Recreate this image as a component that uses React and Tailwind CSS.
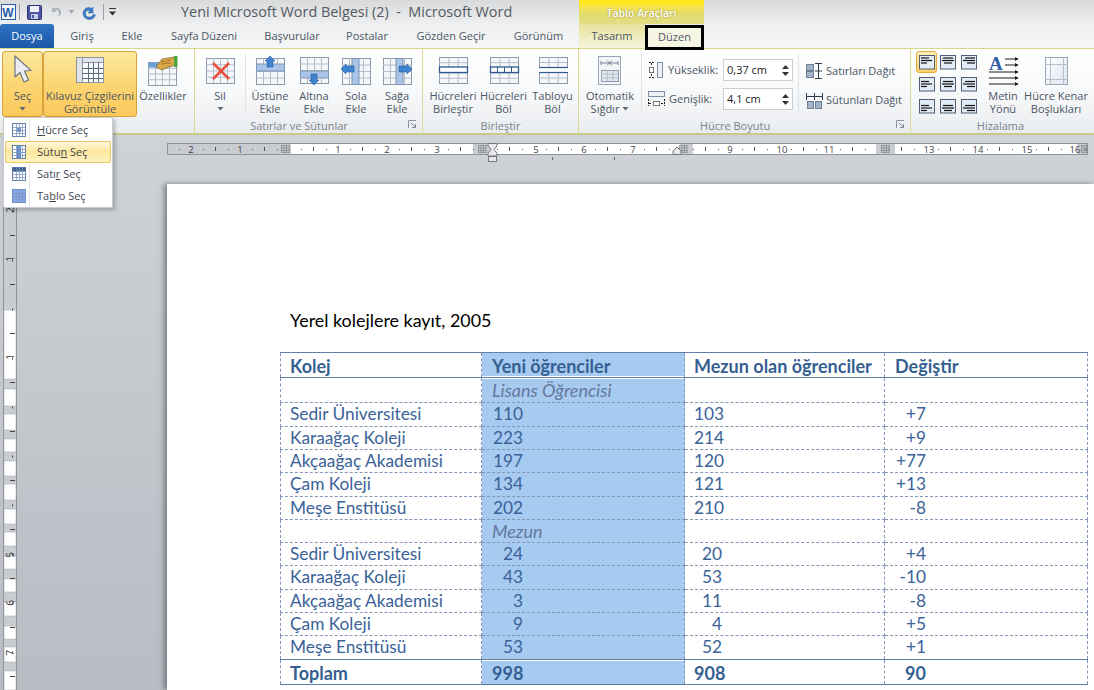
import React from "react";

const BLUE = "#6f9fd8";
const Grid = ({ x = 1, y = 1, w = 28, h = 26, c = 4, r = 4, s = "#8d9aac", f = "#f5f7fa" }) => {
  const v = [], o = [];
  for (let i = 1; i < c; i++) v.push(x + (w * i) / c);
  for (let i = 1; i < r; i++) o.push(y + (h * i) / r);
  return (
    <g>
      <rect x={x + 0.5} y={y + 0.5} width={w} height={h} fill={f} stroke={s} />
      {v.map((a) => <line key={"v" + a} x1={a + 0.5} x2={a + 0.5} y1={y} y2={y + h} stroke="#b4bdc9" />)}
      {o.map((a) => <line key={"o" + a} y1={a + 0.5} y2={a + 0.5} x1={x} x2={x + w} stroke="#b4bdc9" />)}
    </g>
  );
};
const Svg = ({ w = 30, h = 30, children }) => (
  <svg width={w} height={h} viewBox={`0 0 ${w} ${h}`} className="block shrink-0 overflow-visible">{children}</svg>
);

const IconCursor = () => (
  <Svg w={20} h={31}><path d="M2 1 L2 22 L7 17.5 L11 27 L15.5 25 L11.5 16 L18 15.5 Z" fill="#eceef1" stroke="#6d7682" strokeWidth="1.2" strokeLinejoin="round" /></Svg>
);
const IconGuides = () => (
  <Svg><rect x="1.5" y="1.5" width="27" height="25" fill="#fafbfc" stroke="#8b97a6" /><rect x="1.5" y="1.5" width="27" height="5" fill="#dfe3e8" stroke="#8b97a6" /><rect x="1.5" y="1.5" width="6" height="25" fill="#dfe3e8" stroke="#8b97a6" />
    {[12, 17, 22].map((a) => <line key={a} x1="7" x2="28" y1={a + 0.5} y2={a + 0.5} stroke="#5d6d80" />)}
    {[13, 18, 23].map((a) => <line key={a} y1="6" y2="26" x1={a + 0.5} x2={a + 0.5} stroke="#5d6d80" />)}
  </Svg>
);
const IconProps = () => (
  <Svg w={32}><Grid x={1} y={6} w={28} h={23} c={4} r={4} /><rect x="1.5" y="6.5" width="10" height="5" fill={BLUE} />
    <path d="M9 11 L15 3 L28 1 L28 9 L19 12 L15 14 Z" fill="#dba94a" stroke="#7d5a1c" strokeWidth="0.7" /><rect x="27" y="0" width="3.5" height="11" fill="#4aa83c" />
    <path d="M14 6 L24 4 M14 8 L24 7" stroke="#8a6420" strokeWidth="0.7" /></Svg>
);
const IconDelete = () => (
  <Svg><Grid y={2} w={28} h={25} /><path d="M8 7 L24 23 M24 7 L8 23" stroke="#e8503e" strokeWidth="2.6" /></Svg>
);
const IconAbove = () => (
  <Svg><Grid y={2} w={28} h={26} /><rect x="1.5" y="8" width="28" height="7" fill="#a9c4e8" stroke="#7f95b2" /><path d="M15 0 L20 5 L18 5 L18 11 L12 11 L12 5 L10 5 Z" fill="#3e84d0" stroke="#2a5e9c" strokeWidth="0.6" /></Svg>
);
const IconBelow = () => (
  <Svg><Grid y={1} w={28} h={26} /><rect x="1.5" y="15" width="28" height="7" fill="#a9c4e8" stroke="#7f95b2" /><path d="M15 29 L20 24 L18 24 L18 18 L12 18 L12 24 L10 24 Z" fill="#3e84d0" stroke="#2a5e9c" strokeWidth="0.6" /></Svg>
);
const IconLeft = () => (
  <Svg><Grid y={2} w={28} h={26} /><rect x="11" y="2.5" width="7" height="26" fill="#a9c4e8" stroke="#7f95b2" /><path d="M0 13 L5 8 L5 10 L13 10 L13 16 L5 16 L5 18 Z" fill="#3e84d0" stroke="#2a5e9c" strokeWidth="0.6" /></Svg>
);
const IconRight = () => (
  <Svg w={31}><Grid y={2} w={28} h={26} /><rect x="14" y="2.5" width="7" height="26" fill="#a9c4e8" stroke="#7f95b2" /><path d="M30 13 L25 8 L25 10 L17 10 L17 16 L25 16 L25 18 Z" fill="#3e84d0" stroke="#2a5e9c" strokeWidth="0.6" /></Svg>
);
const IconMerge = () => (
  <Svg><Grid y={1} w={28} h={26} c={3} r={5} /><rect x="1.5" y="11" width="28" height="5.5" fill="#fff" stroke="#2e5a8e" strokeWidth="1.3" /></Svg>
);
const IconSplit = () => (
  <Svg><Grid y={1} w={28} h={26} c={3} r={5} /><rect x="1.5" y="11" width="28" height="5.5" fill="#fff" stroke="#2e5a8e" strokeWidth="1.3" />
    {[8, 15, 22].map((a) => <line key={a} x1={a + 0.5} x2={a + 0.5} y1="11" y2="16" stroke="#2e5a8e" />)}</Svg>
);
const IconSplitTable = () => (
  <Svg><Grid y={1} w={28} h={10} c={3} r={2} /><Grid y={16} w={28} h={11} c={3} r={2} /><line x1="1" x2="30" y1="11.5" y2="11.5" stroke="#2e5a8e" strokeWidth="1.2" /><line x1="1" x2="30" y1="16.5" y2="16.5" stroke="#2e5a8e" strokeWidth="1.2" /></Svg>
);
const IconAutoFit = () => (
  <Svg w={24}><rect x="0.5" y="0.5" width="22" height="28" fill="#f3f5f8" stroke="#9ba7b6" /><path d="M3 7 H20 M3 5 V9 M20 5 V9 M9 4.5 L14 9.5 M14 4.5 L9 9.5" stroke="#5b6b7f" strokeWidth="0.8" fill="none" /><Grid x={3} y={14} w={17} h={11} c={3} r={3} f="#e3e9f1" /></Svg>
);
const IconHeight = () => (
  <Svg w={16} h={18}><path d="M1 1.5 H6 M1 16.5 H6 M3.5 2 V5 M3.5 13 V16" stroke="#222" strokeWidth="1" strokeDasharray="2 1" /><rect x="1.5" y="6.5" width="4" height="5" fill="#fff" stroke="#777" /><rect x="9.5" y="1.5" width="5" height="15" fill="#eef2f6" stroke="#8090a4" /></Svg>
);
const IconWidth = () => (
  <Svg w={17} h={17}><rect x="0.5" y="0.5" width="16" height="5" fill="#eef2f6" stroke="#8090a4" /><path d="M0.5 8 V15 M16.5 8 V15 M1 12.5 H4 M13 12.5 H16" stroke="#222" strokeDasharray="2 1" /><rect x="5.5" y="10.5" width="6" height="4" fill="#fff" stroke="#777" /></Svg>
);
const IconDistRows = () => (
  <Svg w={17} h={16}><rect x="0.5" y="1.5" width="7" height="6" fill="#a4b4c8" stroke="#6f7f94" /><rect x="0.5" y="8.5" width="7" height="6" fill="#a4b4c8" stroke="#6f7f94" /><path d="M9 .5 H16 M9 8 H16 M9 15.5 H16 M12.5 1 V15" stroke="#2f3c4d" fill="none" /></Svg>
);
const IconDistCols = () => (
  <Svg w={17} h={17}><path d="M.5 1 V8 M8.5 1 V8 M16.5 1 V8 M1 4.5 H16" stroke="#2f3c4d" fill="none" /><rect x="1.5" y="9.5" width="6" height="7" fill="#a4b4c8" stroke="#6f7f94" /><rect x="9.5" y="9.5" width="6" height="7" fill="#a4b4c8" stroke="#6f7f94" /></Svg>
);
const IconTextDir = () => (
  <Svg w={31} h={31}>
    <text x="1" y="15" fontFamily="Liberation Serif, serif" fontWeight="700" fontSize="19" fill="#2f5ea6">A</text>
    <path d="M17 4 H30 M17 10 H30 M1 17 H30 M1 23 H30 M1 29 H30" stroke="#1d1d1d" fill="none" /><path d="M27 2 L30.5 4 L27 6Z M27 8 L30.5 10 L27 12Z M27 15 L30.5 17 L27 19Z M27 21 L30.5 23 L27 25Z M27 27 L30.5 29 L27 31Z" fill="#1d1d1d" />
  </Svg>
);
const IconMargins = () => (
  <Svg w={25} h={30}><defs><linearGradient id="mg" x1="0" y1="0" x2="1" y2="1"><stop offset="0" stopColor="#fff" /><stop offset="1" stopColor="#dfe6ef" /></linearGradient></defs>
    <rect x="1.5" y="1.5" width="22" height="27" fill="url(#mg)" stroke="#9aa7b7" /><path d="M1 8.5 H24 M1 23.5 H24 M6.5 1 V29 M19.5 1 V29" stroke="#b4bfcc" /></Svg>
);
const Launcher = () => (
  <Svg w={9} h={9}><path d="M.5 8 V.5 H8" stroke="#8b95a1" fill="none" /><path d="M3 3 L7.5 7.5 M7.5 4 V7.5 H4" stroke="#7c8792" fill="none" /></Svg>
);
const Caret = ({ c = "#5b6776" }) => <Svg w={7} h={4}><path d="M.5 0 H6.5 L3.5 3.5Z" fill={c} /></Svg>;

const Align = ({ row, col, active }) => {
  const ys = row === 0 ? [3, 5.5, 8] : row === 1 ? [4.5, 7, 9.5] : [6.5, 9, 11.5];
  const lens = col === 0 ? [[2, 10], [2, 13], [2, 8]] : col === 1 ? [[3, 13], [2, 14], [4, 12]] : [[4, 14], [2, 14], [6, 14]];
  return (
    <div className={active ? "w-[21px] h-[22px] rounded-[3px] border border-[#e0ac3c] bg-gradient-to-b from-[#fff0b8] to-[#fbd369] flex items-center justify-center" : "w-[21px] h-[22px] flex items-center justify-center"}>
      <Svg w={16} h={15}>
        <rect x="0.5" y="0.5" width="15" height="13.5" fill="#e3ebf5" stroke="#4f5e72" />
        {ys.map((y, i) => <line key={i} x1={lens[i][0]} x2={lens[i][1]} y1={y} y2={y} stroke="#111" strokeWidth="1.2" />)}
      </Svg>
    </div>
  );
};

const Big = ({ w, icon, a, b, arrow, on }) => (
  <div className={`${w} h-[66px] shrink-0 flex flex-col items-center rounded-[3px] ${on ? "border border-[#d8a33a] bg-gradient-to-b from-[#fde89e] via-[#fcd673] to-[#fbc95b]" : "border border-transparent"}`}>
    <div className="h-[37px] flex items-center justify-center">{icon}</div>
    <div className="leading-[13px] text-center whitespace-nowrap">{a}</div>
    {b && <div className="leading-[13px] text-center whitespace-nowrap flex items-center gap-[3px]">{b}{arrow && <Caret />}</div>}
    {!b && arrow && <div className="h-[13px] flex items-center justify-center"><Caret /></div>}
  </div>
);

const Group = ({ w, label, launcher, children }) => (
  <div className={`${w} shrink-0 h-[85px] border-r border-[#dcd88f] flex flex-col`}>
    <div className="h-[68px] flex pt-[2px]">{children}</div>
    <div className={`h-[16px] relative flex items-center justify-center text-[#7b838c] leading-none ${launcher ? "pr-[19px]" : ""}`}>
      {label}
      {launcher && <span className="absolute right-[5px] top-[3px]"><Launcher /></span>}
    </div>
  </div>
);

const Sep = ({ h = "h-[60px]" }) => <div className={`w-px ${h} bg-[#dfe3e7] shrink-0 mt-[3px]`} />;

const Tab = ({ w, t }) => <div className={`${w} h-[24px] shrink-0 flex items-center justify-center text-[#4c5664]`}>{t}</div>;

const Spin = ({ v }) => (
  <div className="w-[70px] h-[22px] bg-white border border-[#c9ced4] flex items-center justify-between pl-[3px] pr-[3px] text-[#222]">
    <span>{v}</span>
    <span className="flex flex-col gap-[3px]"><Svg w={7} h={4}><path d="M3.5 0 L7 4 H0Z" fill="#333" /></Svg><Svg w={7} h={4}><path d="M0 0 H7 L3.5 4Z" fill="#333" /></Svg></span>
  </div>
);

const MenuItem = ({ icon, on, children }) => (
  <div className={`h-[22px] flex items-center rounded-[2px] ${on ? "border border-[#ecc75f] bg-gradient-to-b from-[#fff8dc] via-[#fde79c] to-[#fff2c4]" : "border border-transparent"}`}>
    <span className="w-[25px] flex justify-center">{icon}</span>
    <span className="ml-[6px] whitespace-nowrap text-[#3f4752]">{children}</span>
  </div>
);
const MIcon = ({ kind }) => (
  <Svg w={14} h={14}>
    <rect x="0.5" y="0.5" width="13" height="13" fill="#fff" stroke="#5f7fa8" />
    {kind === "cell" && <rect x="5" y="5" width="4" height="4" fill="#6f95cf" />}
    {kind === "col" && <rect x="5" y="0.5" width="4" height="13" fill="#5f8bd0" />}
    {kind === "row" && <rect x="0.5" y="0.5" width="13" height="4" fill="#41608f" />}
    {kind === "all" && <rect x="0.5" y="0.5" width="13" height="13" fill="#86a8ea" />}
    {[3.5, 6.5, 9.5].map((a) => <line key={a} x1={a + 1} x2={a + 1} y1="0" y2="14" stroke="#7b95bd" strokeWidth="0.8" />)}
    {[3.5, 6.5, 9.5].map((a) => <line key={"h" + a} y1={a + 1} y2={a + 1} x1="0" x2="14" stroke="#7b95bd" strokeWidth="0.8" />)}
  </Svg>
);

const HRuler = () => {
  const segs = [[0, 113, 0], [113, 124, 0], [124, 306, 1], [306, 325, 0], [325, 513, 1], [513, 526, 0], [526, 709, 1], [709, 728, 0], [728, 910, 1], [910, 921, 0]];
  const grids = [118, 315, 516, 718, 918];
  const nums = [[24, "2"], [73, "1"], [171, "1"], [220, "2"], [270, "3"], [369, "5"], [417, "6"], [466, "7"], [563, "9"], [615, "10"], [662, "11"], [762, "13"], [811, "14"], [860, "15"], [908, "16"]];
  const ticks = [];
  for (let i = -1; i < 20; i++) {
    const b = 24 + i * 49;
    if (grids.some((g) => Math.abs(b + 24 - g) < 8)) continue;
    ticks.push(<line key={"m" + i} x1={b + 24.5} x2={b + 24.5} y1="4" y2="8" stroke="#555" />);
    for (const d of [12, 37]) ticks.push(<rect key={"d" + i + d} x={b + d} y="6" width="1" height="1" fill="#555" />);
  }
  return (
    <svg width="921" height="20" viewBox="0 0 921 20" className="block">
      {segs.map(([a, b, w]) => <rect key={a} x={a} y="0.5" width={b - a} height="11" fill={w ? "#fff" : "#c9ccd1"} />)}
      <rect x="0.5" y="0.5" width="920" height="11" fill="none" stroke="#8f949a" />
      {ticks}
      {nums.map(([x, t]) => <text key={x} x={x} y="9.5" textAnchor="middle" fontSize="9.5" fontFamily="Open Sans, sans-serif" fill="#444">{t}</text>)}
      {grids.map((g) => (
        <g key={g} stroke="#777b82" strokeWidth="0.6">
          {[-3.5, -1, 1.5, 4].map((d) => <line key={d} x1={g + d} x2={g + d} y1="2" y2="9.5" />)}
          {[2.5, 5, 7.5, 9.5].map((d) => <line key={"h" + d} x1={g - 4} x2={g + 4.5} y1={d} y2={d} />)}
        </g>
      ))}
      <path d="M321 0.5 H330 V3 L327 6.5 L330 10 V13 H321 V10 L324 6.5 L321 3Z" fill="#e6e8eb" stroke="#777" />
      <rect x="321.5" y="13.5" width="8" height="5" fill="#e6e8eb" stroke="#777" />
      <path d="M506 11.5 H514 V8 L510 4 L506 8Z" fill="#e6e8eb" stroke="#777" />
      <rect x="385" y="14" width="1" height="3" fill="#666" /><rect x="447" y="14" width="1" height="3" fill="#666" />
    </svg>
  );
};

const VRuler = () => {
  const whites = [[126, 195], [205, 222], [230, 246], [255, 268], [277, 292], [300, 316], [325, 340], [348, 362], [372, 385], [395, 408], [418, 432], [442, 455], [463, 478], [487, 506]];
  const nums = [[26, "2"], [75, "1"], [173, "1"], [371, "5"], [419, "6"], [469, "7"]];
  const t = [];
  for (let y = 2; y < 506; y += 12.25) {
    const k = Math.round((y - 2) / 12.25) % 4;
    if (k === 2) t.push(<rect key={y} x="9" y={y} width="1" height="2" fill="#444" />);
    else if (k === 0) t.push(<rect key={y} x="7" y={y} width="5" height="1" fill="#444" />);
  }
  return (
    <svg width="14" height="506" viewBox="0 0 14 506" className="block">
      <rect x="0.5" y="0" width="13" height="506" fill="#c9ccd1" stroke="#8f949a" />
      {whites.map(([a, b]) => <rect key={a} x="1" y={a} width="12" height={b - a} fill="#fff" stroke="#9ea3a9" strokeWidth="0.5" />)}
      {t}
      {nums.map(([y, n]) => <text key={y} x="7" y={y} textAnchor="middle" dominantBaseline="central" fontSize="10" fontFamily="Open Sans, sans-serif" fill="#444" transform={`rotate(-90 7 ${y})`}>{n}</text>)}
    </svg>
  );
};

const N = ({ v, w = "w-[31px]" }) => <span className={`inline-block ${w} text-right`}>{v}</span>;
const rows = [
  ["h-[24px]", "Sedir Üniversitesi", "110", "103", "+7"],
  ["h-[23px]", "Karaağaç Koleji", "223", "214", "+9"],
  ["h-[23px]", "Akçaağaç Akademisi", "197", "120", "+77"],
  ["h-[24px]", "Çam Koleji", "134", "121", "+13"],
  ["h-[23px]", "Meşe Enstitüsü", "202", "210", "-8"],
];
const rows2 = [
  ["h-[23px]", "Sedir Üniversitesi", "24", "20", "+4"],
  ["h-[24px]", "Karaağaç Koleji", "43", "53", "-10"],
  ["h-[23px]", "Akçaağaç Akademisi", "3", "11", "-8"],
  ["h-[23px]", "Çam Koleji", "9", "4", "+5"],
  ["h-[24px]", "Meşe Enstitüsü", "53", "52", "+1"],
];
const td = "border border-dashed border-[#8498b5] p-0 pl-[9px] leading-none whitespace-nowrap";
const tdSel = "border border-dashed border-[#8498b5] p-0 pl-[10px] leading-none whitespace-nowrap bg-[#a6caf0]";
const solid = "border-t-[#5f7fa6] [border-top-style:solid] border-b-[#5f7fa6] [border-bottom-style:solid] pt-[1px]";
const Row = ({ r }) => (
  <tr className={r[0]}>
    <td className={`${td} pb-[1px]`}>{r[1]}</td>
    <td className={`${tdSel} pb-[1px]`}><N v={r[2]} /></td>
    <td className={`${td} pb-[1px]`}><N v={r[3]} w="w-[28px]" /></td>
    <td className={`${td} pl-[10px] pb-[1px]`}><N v={r[4]} w="w-[31px]" /></td>
  </tr>
);
const Sub = ({ t, h, first }) => (
  <tr className={h}>
    <td className={td} />
    <td className={`${tdSel} pl-[9px] italic text-[18px] text-[#64789a] pb-[1px] ${first ? "shadow-[inset_0_1px_0_#fff]" : ""}`}>{t}</td>
    <td className={td} /><td className={td} />
  </tr>
);

export default function App() {
  return (
    <div className="w-[1094px] h-[690px] overflow-hidden flex flex-col text-[11px] bg-[#c6cad0]" style={{ fontFamily: '"Open Sans", "Noto Sans", sans-serif' }}>
      {/* chrome */}
      <div className="h-[48px] shrink-0 bg-gradient-to-b from-[#d9dadc] via-[#eeeff0] to-[#f5f6f7]">
        <div className="h-[24px] flex">
          <div className="w-[181px] shrink-0 flex items-center pl-[1px]">
            <Svg w={16} h={20}><rect x="0.5" y="2.5" width="14" height="15" fill="#f4f7fc" stroke="#2a5caa" /><text x="1.2" y="14.5" fontSize="12" fontWeight="700" fontFamily="Liberation Sans, sans-serif" fill="#2a5caa">W</text></Svg>
            <div className="w-px h-[16px] bg-[#9a9ea4] ml-[2px]" />
            <span className="ml-[7px]"><Svg w={15} h={15}><rect x="0.5" y="0.5" width="14" height="14" rx="1" fill="#4a56a6" stroke="#2a3270" /><rect x="3" y="1" width="9" height="6" fill="#eef0f6" /><rect x="4" y="9" width="7" height="5" fill="#c8cde0" /><rect x="5" y="10" width="2" height="3" fill="#4a56a6" /></Svg></span>
            <span className="ml-[7px]"><Svg w={13} h={14}><path d="M3 2 V7 H8 L6 5 C8 4 10 5 10 8 C10 10 9 11 8 12 C11 11 12.5 9 12 6.5 C11.5 3.5 8 2 5 3.5Z" fill="#aab1bb" /></Svg></span>
            <span className="ml-[6px]"><Caret c="#a0a6ae" /></span>
            <span className="ml-[7px]"><Svg w={15} h={15}><path d="M11 2 V8 H6 L8 6 C5.5 4.5 3.5 6 3.5 8.5 C3.5 11 5.5 12.5 8 12 C10 11.6 11 10.5 11.5 9 L13.5 10 C12.8 12.5 10.5 14.5 7.5 14.5 C4 14.5 1 12 1 8.5 C1 5 4 2 7.5 2.5 C8.5 2.7 9 3 9.5 3.5Z" fill="#3d7cc9" stroke="#2a5a9c" strokeWidth="0.4" /></Svg></span>
            <div className="w-px h-[16px] bg-[#9a9ea4] ml-[6px]" />
            <span className="ml-[5px]"><Svg w={7} h={8}><rect x="0" y="0" width="7" height="1" fill="#333" /><path d="M0 3.5 H7 L3.5 7.5Z" fill="#333" /></Svg></span>
          </div>
          <div className="w-[398px] shrink-0 flex items-center whitespace-pre text-[14.4px] text-[#545a62] leading-none">Yeni Microsoft Word Belgesi (2)  -  Microsoft Word</div>
          <div className="w-[125px] shrink-0 bg-gradient-to-b from-[#ffe81a] via-[#e4dc6e] to-[#e2dd85] border-t-[3px] border-[#ffe81a] flex items-center justify-center font-semibold text-white text-[10.5px] pt-[1px]" style={{ textShadow: "0 0 2px #8a8530" }}>Tablo Araçları</div>
        </div>
        <div className="h-[24px] flex">
          <div className="w-[54px] h-[24px] shrink-0 rounded-t-[3px] bg-gradient-to-b from-[#2f74c4] to-[#1b57a7] text-white flex items-center justify-center">Dosya</div>
          <Tab w="w-[56px]" t="Giriş" /><Tab w="w-[44px]" t="Ekle" /><Tab w="w-[100px]" t="Sayfa Düzeni" /><Tab w="w-[76px]" t="Başvurular" /><Tab w="w-[74px]" t="Postalar" /><Tab w="w-[94px]" t="Gözden Geçir" /><Tab w="w-[81px]" t="Görünüm" />
          <div className="w-[66px] shrink-0 flex items-center justify-center text-[#4c5664] bg-gradient-to-b from-[#e6e29a] to-[#f6f5dd]">Tasarım</div>
          <div className="w-[59px] h-[25px] shrink-0 border-[3px] border-black bg-[#f7f6e4] flex items-center justify-center text-[#4c5664] relative z-10 mt-[1px]">Düzen</div>
        </div>
      </div>
      {/* ribbon */}
      <div className="h-[87px] shrink-0 flex border-t border-b-2 border-t-[#d9d68a] border-b-[#c9c98a] bg-gradient-to-b from-[#ffffff] via-[#f8f9fa] to-[#e9ecef] text-[#4c5664]">
        <Group w="w-[195px]" label="">
          <div className="pl-[2px] flex">
            <Big w="w-[41px]" on icon={<IconCursor />} a="Seç" arrow />
            <Big w="w-[94px]" on icon={<IconGuides />} a="Kılavuz Çizgilerini" b="Görüntüle" />
            <Big w="w-[52px]" icon={<IconProps />} a="Özellikler" />
          </div>
        </Group>
        <Group w="w-[228px]" label="Satırlar ve Sütunlar" launcher>
          <div className="flex pl-[9px]">
            <Big w="w-[32px]" icon={<IconDelete />} a="Sil" arrow />
            <div className="w-[9px]" /><Sep />
            <div className="w-[3px]" />
            <Big w="w-[42px]" icon={<IconAbove />} a="Üstüne" b="Ekle" />
            <Big w="w-[46px]" icon={<IconBelow />} a="Altına" b="Ekle" />
            <Big w="w-[38px]" icon={<IconLeft />} a="Sola" b="Ekle" />
            <Big w="w-[44px]" icon={<IconRight />} a="Sağa" b="Ekle" />
          </div>
        </Group>
        <Group w="w-[156px]" label="Birleştir">
          <div className="flex pl-[5px]">
            <Big w="w-[50px]" icon={<IconMerge />} a="Hücreleri" b="Birleştir" />
            <Big w="w-[51px]" icon={<IconSplit />} a="Hücreleri" b="Böl" />
            <Big w="w-[47px]" icon={<IconSplitTable />} a="Tabloyu" b="Böl" />
          </div>
        </Group>
        <Group w="w-[332px]" label="Hücre Boyutu" launcher>
          <div className="flex">
            <Big w="w-[62px]" icon={<IconAutoFit />} a="Otomatik" b="Sığdır" arrow />
            <Sep />
            <div className="w-[156px] shrink-0 flex flex-col gap-[7px] pl-[6px] pt-[8px] text-[#4c5664]">
              <div className="flex items-center gap-[4px]"><IconHeight /><span className="w-[51px]">Yükseklik:</span><Spin v="0,37 cm" /></div>
              <div className="flex items-center gap-[4px]"><IconWidth /><span className="w-[50px]">Genişlik:</span><Spin v="4,1 cm" /></div>
            </div>
            <Sep />
            <div className="flex flex-col gap-[12px] pl-[7px] pt-[12px]">
              <div className="flex items-center gap-[3px] whitespace-nowrap"><IconDistRows />Satırları Dağıt</div>
              <div className="flex items-center gap-[3px] whitespace-nowrap"><IconDistCols />Sütunları Dağıt</div>
            </div>
          </div>
        </Group>
        <div className="flex-1 h-[85px] flex flex-col">
          <div className="h-[68px] flex pt-[2px]">
            <div className="ml-[5px] grid grid-cols-3 grid-rows-3 w-[64px] h-[66px]">
              {[0, 1, 2].map((r) => [0, 1, 2].map((c) => <Align key={`${r}-${c}`} row={r} col={c} active={r === 0 && c === 0} />))}
            </div>
            <div className="w-[3px]" />
            <Big w="w-[40px]" icon={<IconTextDir />} a="Metin" b="Yönü" />
            <Big w="w-[66px]" icon={<IconMargins />} a="Hücre Kenar" b="Boşlukları" />
          </div>
          <div className="h-[16px] flex items-center justify-center text-[#7b838c] leading-none pr-[4px]">Hizalama</div>
        </div>
      </div>
      {/* workspace */}
      <div className="flex-1 min-h-0 relative bg-gradient-to-b from-[#cfd2d6] to-[#b8bcc3]">
        <div className="h-[49px] pl-[167px] pt-[8px]"><HRuler /></div>
        <div className="flex h-[506px]">
          <div className="w-[167px] shrink-0 pl-[3px]"><VRuler /></div>
          <div className="flex-1 bg-white pl-[113px] pt-[125px] shadow-[-3px_0_5px_rgba(60,65,75,0.55)]" style={{ fontFamily: "Lato, sans-serif" }}>
            <p className="pl-[10px] text-[17.9px] leading-[22px] text-black whitespace-nowrap">Yerel kolejlere kayıt, 2005</p>
            <table className="mt-[21px] table-fixed border-collapse w-[807px] text-[17.3px] text-[#3a6298]">
              <colgroup><col className="w-[201px]" /><col className="w-[203px]" /><col className="w-[200px]" /><col className="w-[203px]" /></colgroup>
              <tbody>
                <tr className="h-[25px] font-bold text-[18px] text-[#365f91]">
                  <td className={`${td} ${solid}`}>Kolej</td>
                  <td className={`${tdSel} pl-[9px] ${solid} shadow-[inset_0_-1px_0_#fff]`}>Yeni öğrenciler</td>
                  <td className={`${td} ${solid}`}>Mezun olan öğrenciler</td>
                  <td className={`${td} pl-[10px] ${solid}`}>Değiştir</td>
                </tr>
                <Sub t="Lisans Öğrencisi" h="h-[25px]" first />
                {rows.map((r) => <Row key={r[1]} r={r} />)}
                <Sub t="Mezun" h="h-[23px]" />
                {rows2.map((r) => <Row key={r[1]} r={r} />)}
                <tr className="h-[25px] font-bold text-[18px] text-[#365f91]">
                  <td className={`${td} ${solid}`}>Toplam</td>
                  <td className={`${tdSel} ${solid} shadow-[inset_0_1px_0_#fff]`}><N v="998" /></td>
                  <td className={`${td} ${solid}`}>908</td>
                  <td className={`${td} pl-[10px] ${solid}`}><N v="90" /></td>
                </tr>
              </tbody>
            </table>
          </div>
        </div>
        {/* dropdown menu */}
        <div className="absolute left-[3px] top-[-18px] w-[110px] h-[91px] bg-white border border-[#c9ccd2] rounded-[2px] shadow-[2px_2px_4px_rgba(0,0,0,0.25)] px-[1px] py-[1px] z-20">
          <div className="absolute left-[25px] top-0 bottom-0 w-px bg-[#e3e5e8]" />
          <div className="relative">
            <MenuItem icon={<MIcon kind="cell" />}><u>H</u>ücre Seç</MenuItem>
            <MenuItem on icon={<MIcon kind="col" />}>Sütu<u>n</u> Seç</MenuItem>
            <MenuItem icon={<MIcon kind="row" />}>Satı<u>r</u> Seç</MenuItem>
            <MenuItem icon={<MIcon kind="all" />}>Ta<u>b</u>lo Seç</MenuItem>
          </div>
        </div>
      </div>
    </div>
  );
}
